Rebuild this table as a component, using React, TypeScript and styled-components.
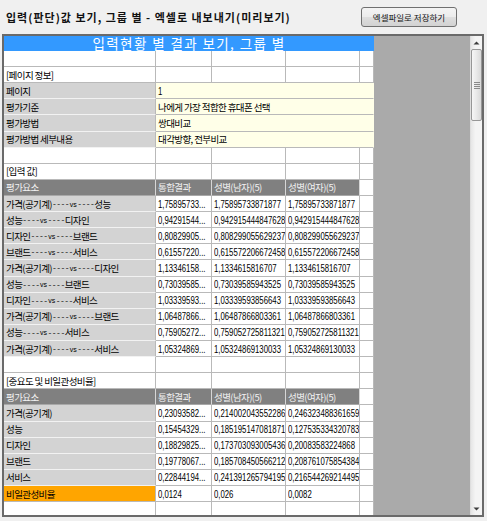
import React from 'react';
import styled, { createGlobalStyle } from 'styled-components';

const GlobalStyle = createGlobalStyle`
  html, body {
    margin: 0;
    padding: 0;
    background: #f0f0f0;
  }
  body {
    width: 487px;
    height: 521px;
    overflow: hidden;
    font-family: "Noto Sans CJK KR", "Liberation Sans", sans-serif;
  }
`;

type Tone = 'plain' | 'key' | 'value' | 'head' | 'alert';

const toneBg: Record<Tone, string> = {
  plain: '#ffffff',
  key: '#d3d3d3',
  value: '#ffffe8',
  head: '#808080',
  alert: '#ffa500',
};

const toneText: Record<Tone, string> = {
  plain: '#000000',
  key: '#000000',
  value: '#000000',
  head: '#f2f2f2',
  alert: '#000000',
};

const toneBottom: Record<Tone, string> = {
  plain: '#b9b9b9',
  key: '#f2f2f2',
  value: '#b9b9b9',
  head: '#a8a8a8',
  alert: '#b9b9b9',
};

const toneRight: Record<Tone, string> = {
  plain: '#b9b9b9',
  key: '#b9b9b9',
  value: '#ffffe8',
  head: '#d6d6d6',
  alert: '#b9b9b9',
};

const Page = styled.div`
  width: 487px;
  height: 521px;
  box-sizing: border-box;
  padding-top: 7px;
  display: flex;
  flex-direction: column;
`;

const TopBar = styled.div`
  height: 20px;
  display: flex;
  align-items: center;
  justify-content: space-between;
  padding: 0 30px 0 6px;
`;

const Title = styled.h1`
  margin: 0;
  font-size: 11px;
  font-weight: 700;
  line-height: 20px;
  letter-spacing: 1px;
  color: #111;
  white-space: nowrap;
`;

const SaveButton = styled.button`
  width: 96px;
  height: 20px;
  padding: 0;
  border: 1px solid #707070;
  border-radius: 3px;
  background: linear-gradient(#f4f4f4 0%, #ececec 48%, #dedede 52%, #d2d2d2 100%);
  font-family: inherit;
  font-size: 8.5px;
  color: #111;
  white-space: nowrap;
`;

const Frame = styled.div`
  margin: 7px 0 0 2px;
  width: 482px;
  height: 483px;
  box-sizing: border-box;
  border: 2px solid #6a6a6a;
  background: #aaaaaa;
  display: flex;
`;

const Viewport = styled.div`
  flex: 1;
  overflow: hidden;
  display: flex;
  flex-direction: column;
`;

const Banner = styled.div`
  width: 370px;
  height: 15px;
  flex: none;
  background: #3399ff;
  color: #ffffff;
  font-size: 13.5px;
  line-height: 15px;
  letter-spacing: 1.4px;
  text-align: center;
  white-space: nowrap;
  display: flex;
  align-items: center;
  justify-content: center;
`;

const Table = styled.div`
  width: 370px;
  display: grid;
  grid-template-columns: 152px 56px 74px 74px 14px;
  grid-auto-rows: 16.12px;
  flex: none;
`;

const Cell = styled.div<{ $tone: Tone; $span?: number }>`
  grid-column: span ${(p) => p.$span ?? 1};
  box-sizing: border-box;
  min-width: 0;
  padding: 0 2px;
  display: flex;
  align-items: center;
  overflow: hidden;
  white-space: nowrap;
  background: ${(p) => toneBg[p.$tone]};
  color: ${(p) => toneText[p.$tone]};
  border-right: 1px solid ${(p) => toneRight[p.$tone]};
  border-bottom: 1px solid ${(p) => toneBottom[p.$tone]};
  font-size: 9.5px;
  letter-spacing: -0.6px;
`;

const NumText = styled.span`
  display: inline-block;
  flex: none;
  font-family: "Liberation Sans", sans-serif;
  font-size: 10.5px;
  letter-spacing: 0;
  transform: scaleX(0.74);
  transform-origin: left center;
`;

const Vs = styled.span`
  font-family: "Liberation Sans", sans-serif;
  font-size: 7px;
  letter-spacing: 0;
  margin: 1px 0.5px 0;
`;

const Dash = styled.span`
  font-family: "Liberation Mono", monospace;
  font-size: 8px;
  letter-spacing: -0.5px;
`;

const ScrollBar = styled.div`
  width: 12px;
  flex: none;
  display: flex;
  flex-direction: column;
  background: linear-gradient(to right, #e6e6e6, #f4f4f4 40%, #f4f4f4);
  border-left: 1px solid #dedede;
  box-sizing: border-box;
`;

const ArrowButton = styled.div`
  height: 13px;
  flex: none;
  display: flex;
  align-items: center;
  justify-content: center;
`;

const Track = styled.div`
  flex: 1;
  display: flex;
  flex-direction: column;
`;

const Thumb = styled.div`
  height: 72px;
  box-sizing: border-box;
  border: 1px solid #979797;
  border-radius: 2px;
  background: linear-gradient(to right, #f6f6f6, #e9e9e9 50%, #d9d9d9);
  display: flex;
  align-items: center;
  justify-content: center;
`;

type Row =
  | { kind: 'blank' }
  | { kind: 'section'; text: string }
  | { kind: 'info'; key: string; value: string }
  | { kind: 'head' }
  | { kind: 'data'; label: React.ReactNode; a: string; b: string; c: string; alert?: boolean };

const pair = (x: string, y: string) => (
  <>
    {x}
    <Dash>----</Dash>
    <Vs>vs</Vs>
    <Dash>----</Dash>
    {y}
  </>
);

const rows: Row[] = [
  { kind: 'blank' },
  { kind: 'section', text: '[페이지 정보]' },
  { kind: 'info', key: '페이지', value: '1' },
  { kind: 'info', key: '평가기준', value: '나에게 가장 적합한 휴대폰 선택' },
  { kind: 'info', key: '평가방법', value: '쌍대비교' },
  { kind: 'info', key: '평가방법 세부내용', value: '대각방향, 전부비교' },
  { kind: 'blank' },
  { kind: 'section', text: '[입력 값]' },
  { kind: 'head' },
  { kind: 'data', label: pair('가격(공기계)', '성능'), a: '1,75895733...', b: '1,75895733871877', c: '1,75895733871877' },
  { kind: 'data', label: pair('성능', '디자인'), a: '0,94291544...', b: '0,942915444847628', c: '0,942915444847628' },
  { kind: 'data', label: pair('디자인', '브랜드'), a: '0,80829905...', b: '0,808299055629237', c: '0,808299055629237' },
  { kind: 'data', label: pair('브랜드', '서비스'), a: '0,61557220...', b: '0,615572206672458', c: '0,615572206672458' },
  { kind: 'data', label: pair('가격(공기계)', '디자인'), a: '1,13346158...', b: '1,1334615816707', c: '1,1334615816707' },
  { kind: 'data', label: pair('성능', '브랜드'), a: '0,73039585...', b: '0,73039585943525', c: '0,73039585943525' },
  { kind: 'data', label: pair('디자인', '서비스'), a: '1,03339593...', b: '1,03339593856643', c: '1,03339593856643' },
  { kind: 'data', label: pair('가격(공기계)', '브랜드'), a: '1,06487866...', b: '1,06487866803361', c: '1,06487866803361' },
  { kind: 'data', label: pair('성능', '서비스'), a: '0,75905272...', b: '0,759052725811321', c: '0,759052725811321' },
  { kind: 'data', label: pair('가격(공기계)', '서비스'), a: '1,05324869...', b: '1,05324869130033', c: '1,05324869130033' },
  { kind: 'blank' },
  { kind: 'section', text: '[중요도 및 비일관성비율]' },
  { kind: 'head' },
  { kind: 'data', label: '가격(공기계)', a: '0,23093582...', b: '0,214002043552286', c: '0,246323488361659' },
  { kind: 'data', label: '성능', a: '0,15454329...', b: '0,185195147081871', c: '0,127535334320783' },
  { kind: 'data', label: '디자인', a: '0,18829825...', b: '0,173703093005436', c: '0,20083583224868' },
  { kind: 'data', label: '브랜드', a: '0,19778067...', b: '0,185708450566212', c: '0,208761075854384' },
  { kind: 'data', label: '서비스', a: '0,22844194...', b: '0,241391265794195', c: '0,216544269214495' },
  { kind: 'data', label: '비일관성비율', a: '0,0124', b: '0,026', c: '0,0082', alert: true },
  { kind: 'blank' },
];

const headers = ['평가요소', '통합결과', '성별(남자)(5)', '성별(여자)(5)'];

function renderRow(row: Row, i: number) {
  switch (row.kind) {
    case 'blank':
      return [0, 1, 2, 3, 4].map((c) => <Cell key={`${i}-${c}`} $tone="plain" />);
    case 'section':
      return [
        <Cell key={`${i}-0`} $tone="plain">{row.text}</Cell>,
        ...[1, 2, 3, 4].map((c) => <Cell key={`${i}-${c}`} $tone="plain" />),
      ];
    case 'info':
      return [
        <Cell key={`${i}-0`} $tone="key">{row.key}</Cell>,
        <Cell key={`${i}-1`} $tone="value" $span={4}>
          {row.value === '1' ? <NumText>{row.value}</NumText> : row.value}
        </Cell>,
      ];
    case 'head':
      return [
        ...headers.map((h, c) => (
          <Cell key={`${i}-${c}`} $tone="head">{h}</Cell>
        )),
        <Cell key={`${i}-4`} $tone="plain" />,
      ];
    case 'data':
      return [
        <Cell key={`${i}-0`} $tone={row.alert ? 'alert' : 'key'}>{row.label}</Cell>,
        <Cell key={`${i}-1`} $tone="plain"><NumText>{row.a}</NumText></Cell>,
        <Cell key={`${i}-2`} $tone="plain"><NumText>{row.b}</NumText></Cell>,
        <Cell key={`${i}-3`} $tone="plain"><NumText>{row.c}</NumText></Cell>,
        <Cell key={`${i}-4`} $tone="plain" />,
      ];
  }
}

const UpArrow = () => (
  <svg width="7" height="4" viewBox="0 0 7 4">
    <path d="M0.5 3.5 L3.5 0.5 L6.5 3.5 Z" fill="#3c3c3c" />
  </svg>
);

const DownArrow = () => (
  <svg width="7" height="4" viewBox="0 0 7 4">
    <path d="M0.5 0.5 L3.5 3.5 L6.5 0.5 Z" fill="#3c3c3c" />
  </svg>
);

const Grip = () => (
  <svg width="6" height="7" viewBox="0 0 6 7">
    <g stroke="#8a8a8a" strokeWidth="1">
      <line x1="0" y1="0.5" x2="6" y2="0.5" />
      <line x1="0" y1="2.5" x2="6" y2="2.5" />
      <line x1="0" y1="4.5" x2="6" y2="4.5" />
      <line x1="0" y1="6.5" x2="6" y2="6.5" />
    </g>
  </svg>
);

export default function App() {
  return (
    <>
      <GlobalStyle />
      <Page>
        <TopBar>
          <Title>입력(판단)값 보기, 그룹 별 - 엑셀로 내보내기(미리보기)</Title>
          <SaveButton type="button">엑셀파일로 저장하기</SaveButton>
        </TopBar>
        <Frame>
          <Viewport>
            <Banner>입력현황 별 결과 보기, 그룹 별</Banner>
            <Table>{rows.map((r, i) => renderRow(r, i))}</Table>
          </Viewport>
          <ScrollBar>
            <ArrowButton>
              <UpArrow />
            </ArrowButton>
            <Track>
              <Thumb>
                <Grip />
              </Thumb>
            </Track>
            <ArrowButton>
              <DownArrow />
            </ArrowButton>
          </ScrollBar>
        </Frame>
      </Page>
    </>
  );
}
